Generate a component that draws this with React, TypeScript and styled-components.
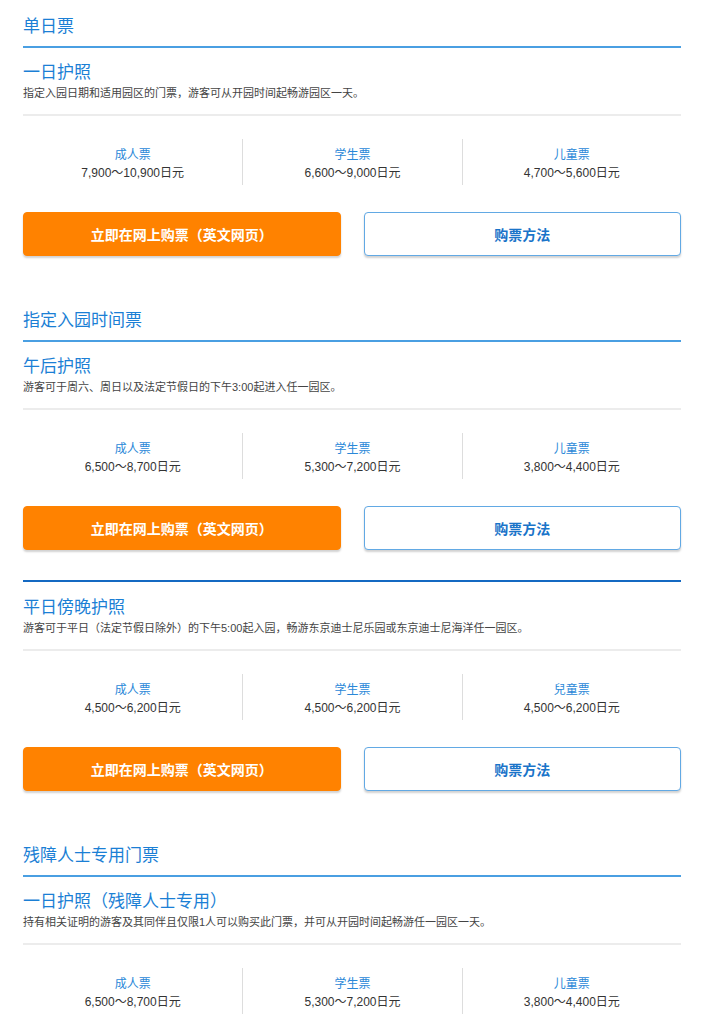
import { FC } from 'react'
import styled, { createGlobalStyle } from 'styled-components'

interface Price {
  label: string
  value: string
}

interface Ticket {
  name: string
  desc: string
  prices: Price[]
  buttons?: boolean
}

interface Section {
  title: string
  tickets: Ticket[]
}

const sections: Section[] = [
  {
    title: '单日票',
    tickets: [
      {
        name: '一日护照',
        desc: '指定入园日期和适用园区的门票，游客可从开园时间起畅游园区一天。',
        prices: [
          { label: '成人票', value: '7,900～10,900日元' },
          { label: '学生票', value: '6,600～9,000日元' },
          { label: '儿童票', value: '4,700～5,600日元' },
        ],
      },
    ],
  },
  {
    title: '指定入园时间票',
    tickets: [
      {
        name: '午后护照',
        desc: '游客可于周六、周日以及法定节假日的下午3:00起进入任一园区。',
        prices: [
          { label: '成人票', value: '6,500～8,700日元' },
          { label: '学生票', value: '5,300～7,200日元' },
          { label: '儿童票', value: '3,800～4,400日元' },
        ],
      },
      {
        name: '平日傍晚护照',
        desc: '游客可于平日（法定节假日除外）的下午5:00起入园，畅游东京迪士尼乐园或东京迪士尼海洋任一园区。',
        prices: [
          { label: '成人票', value: '4,500～6,200日元' },
          { label: '学生票', value: '4,500～6,200日元' },
          { label: '兒童票', value: '4,500～6,200日元' },
        ],
      },
    ],
  },
  {
    title: '残障人士专用门票',
    tickets: [
      {
        name: '一日护照（残障人士专用）',
        desc: '持有相关证明的游客及其同伴且仅限1人可以购买此门票，并可从开园时间起畅游任一园区一天。',
        prices: [
          { label: '成人票', value: '6,500～8,700日元' },
          { label: '学生票', value: '5,300～7,200日元' },
          { label: '儿童票', value: '3,800～4,400日元' },
        ],
      },
    ],
  },
]

const App: FC = () => {
  return (
    <>
      <GlobalStyle />
      <Page>
        {sections.map((section) => (
          <SectionBox key={section.title}>
            <SectionTitle>{section.title}</SectionTitle>
            {section.tickets.map((ticket, i) => (
              <TicketItem key={ticket.name} $separated={i > 0}>
                <TicketName>{ticket.name}</TicketName>
                <TicketDesc>{ticket.desc}</TicketDesc>
                <PriceRow>
                  {ticket.prices.map((p) => (
                    <PriceCol key={p.label}>
                      <PriceLabel>{p.label}</PriceLabel>
                      <PriceValue>{p.value}</PriceValue>
                    </PriceCol>
                  ))}
                </PriceRow>
                <ButtonRow>
                  <Button $primary>立即在网上购票（英文网页）</Button>
                  <Button>购票方法</Button>
                </ButtonRow>
              </TicketItem>
            ))}
          </SectionBox>
        ))}
      </Page>
    </>
  )
}

export default App

const GlobalStyle = createGlobalStyle`
  body {
    margin: 0;
    background: #ffffff;
    font-family: "Liberation Sans", "Noto Sans CJK SC", sans-serif;
    color: #333333;
  }
`

const Page = styled.div`
  padding: 0 24px 0 23px;
`

const SectionBox = styled.section`
  padding-top: 17px;
  & + & {
    padding-top: 55px;
  }
`

const SectionTitle = styled.h2`
  margin: 0;
  font-size: 17px;
  line-height: 20px;
  font-weight: 400;
  color: #1b7fd5;
  padding-bottom: 9px;
  border-bottom: 2px solid #4a9fe2;
`

const TicketItem = styled.div<{ $separated?: boolean }>`
  padding-top: 14px;
  ${({ $separated }) =>
    $separated &&
    `
    margin-top: 30px;
    border-top: 2px solid #1469c2;
    padding-top: 15px;
  `}
`

const TicketName = styled.h3`
  margin: 0;
  font-size: 17px;
  line-height: 22px;
  font-weight: 400;
  color: #1b7fd5;
`

const TicketDesc = styled.p`
  margin: 1px 0 0;
  font-size: 11px;
  line-height: 16px;
  color: #444444;
  padding-bottom: 13px;
  border-bottom: 2px solid #ececec;
`

const PriceRow = styled.div`
  display: grid;
  grid-template-columns: repeat(3, 1fr);
  margin-top: 23px;
`

const PriceCol = styled.div`
  height: 46px;
  padding-top: 7px;
  box-sizing: border-box;
  text-align: center;
  & + & {
    border-left: 1px solid #dddddd;
  }
`

const PriceLabel = styled.div`
  font-size: 12px;
  line-height: 18px;
  color: #2a88d8;
`

const PriceValue = styled.div`
  font-size: 12px;
  line-height: 18px;
  color: #333333;
`

const ButtonRow = styled.div`
  display: grid;
  grid-template-columns: 1fr 1fr;
  gap: 23px;
  margin-top: 27px;
`

const Button = styled.button<{ $primary?: boolean }>`
  height: 44px;
  border-radius: 4px;
  font-family: "Liberation Sans", "Noto Sans CJK SC", sans-serif;
  font-size: 14px;
  font-weight: 700;
  cursor: pointer;
  box-shadow: 0 2px 2px rgba(0, 0, 0, 0.18);
  background: ${({ $primary }) => ($primary ? '#ff8200' : '#ffffff')};
  color: ${({ $primary }) => ($primary ? '#ffffff' : '#1a74c9')};
  border: 1px solid ${({ $primary }) => ($primary ? '#ff8200' : '#62a9e4')};
`
